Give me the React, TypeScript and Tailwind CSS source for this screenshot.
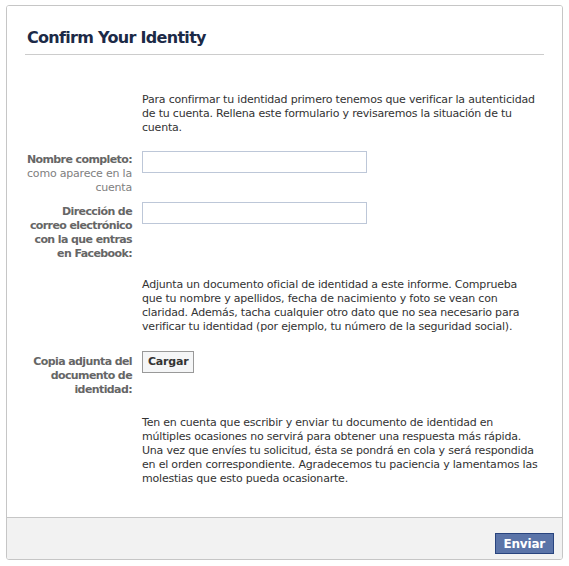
import React from "react";

const font = { fontFamily: '"DejaVu Sans", Verdana, sans-serif' };

export default function App() {
  return (
    <div className="w-[569px] h-[566px] bg-white overflow-hidden" style={font}>
      <div className="ml-[6px] mt-[5px] w-[557px] h-[555px] border border-[#c6c6c6] rounded-[3px] flex flex-col overflow-hidden">
        <div className="flex-1 bg-white px-[18px] pt-[22px] text-[11px] leading-[14px] tracking-[-0.2px] text-[#333]">
          <div className="border-b border-[#cccccc] pb-[6px]">
            <h2 className="text-[16px] leading-[20px] font-bold tracking-[-0.7px] text-[#1c2a47] pl-[2px]">Confirm Your Identity</h2>
          </div>

          <p className="mt-[38px] ml-[117px] whitespace-nowrap">
            Para confirmar tu identidad primero tenemos que verificar la autenticidad<br />
            de tu cuenta. Rellena este formulario y revisaremos la situación de tu<br />
            cuenta.
          </p>

          <div className="mt-[16px] grid grid-cols-[107px_1fr] gap-x-[10px]">
            <div className="pt-[2px] text-right whitespace-nowrap">
              <div className="font-bold text-[#666] tracking-[-0.6px]">Nombre completo:</div>
              <div className="text-[#808080]">como aparece en la<br />cuenta</div>
            </div>
            <div>
              <input type="text" className="w-[225px] h-[22px] border border-[#bdc7d8] bg-white outline-none" />
            </div>
          </div>

          <div className="mt-[7px] grid grid-cols-[107px_1fr] gap-x-[10px]">
            <div className="pt-[3px] text-right font-bold text-[#666] whitespace-nowrap tracking-[-0.6px]">
              Dirección de<br />correo electrónico<br />con la que entras<br />en Facebook:
            </div>
            <div>
              <input type="text" className="w-[225px] h-[22px] border border-[#bdc7d8] bg-white outline-none" />
            </div>
          </div>

          <p className="mt-[17px] ml-[117px] whitespace-nowrap">
            Adjunta un documento oficial de identidad a este informe. Comprueba<br />
            que tu nombre y apellidos, fecha de nacimiento y foto se vean con<br />
            claridad. Además, tacha cualquier otro dato que no sea necesario para<br />
            verificar tu identidad (por ejemplo, tu número de la seguridad social).
          </p>

          <div className="mt-[17px] grid grid-cols-[107px_1fr] gap-x-[10px]">
            <div className="pt-[4px] text-right font-bold text-[#666] whitespace-nowrap tracking-[-0.6px]">
              Copia adjunta del<br />documento de<br />identidad:
            </div>
            <div>
              <button className="h-[22px] px-[5px] border border-[#999] bg-[#f5f6f7] text-[#333] font-bold text-[11px] leading-[14px] tracking-[-0.2px]">
                Cargar
              </button>
            </div>
          </div>

          <p className="mt-[19px] ml-[117px] whitespace-nowrap">
            Ten en cuenta que escribir y enviar tu documento de identidad en<br />
            múltiples ocasiones no servirá para obtener una respuesta más rápida.<br />
            Una vez que envíes tu solicitud, ésta se pondrá en cola y será respondida<br />
            en el orden correspondiente. Agradecemos tu paciencia y lamentamos las<br />
            molestias que esto pueda ocasionarte.
          </p>
        </div>

        <div className="h-[42px] shrink-0 border-t border-[#c6c6c6] bg-[#f2f2f2] flex justify-end items-start pt-[15px] pr-[8px]">
          <button className="h-[21px] px-[8px] border border-[#29447e] bg-[#5b74a8] text-white font-bold text-[12px] leading-[14px] tracking-[-0.2px]">
            Enviar
          </button>
        </div>
      </div>
    </div>
  );
}
